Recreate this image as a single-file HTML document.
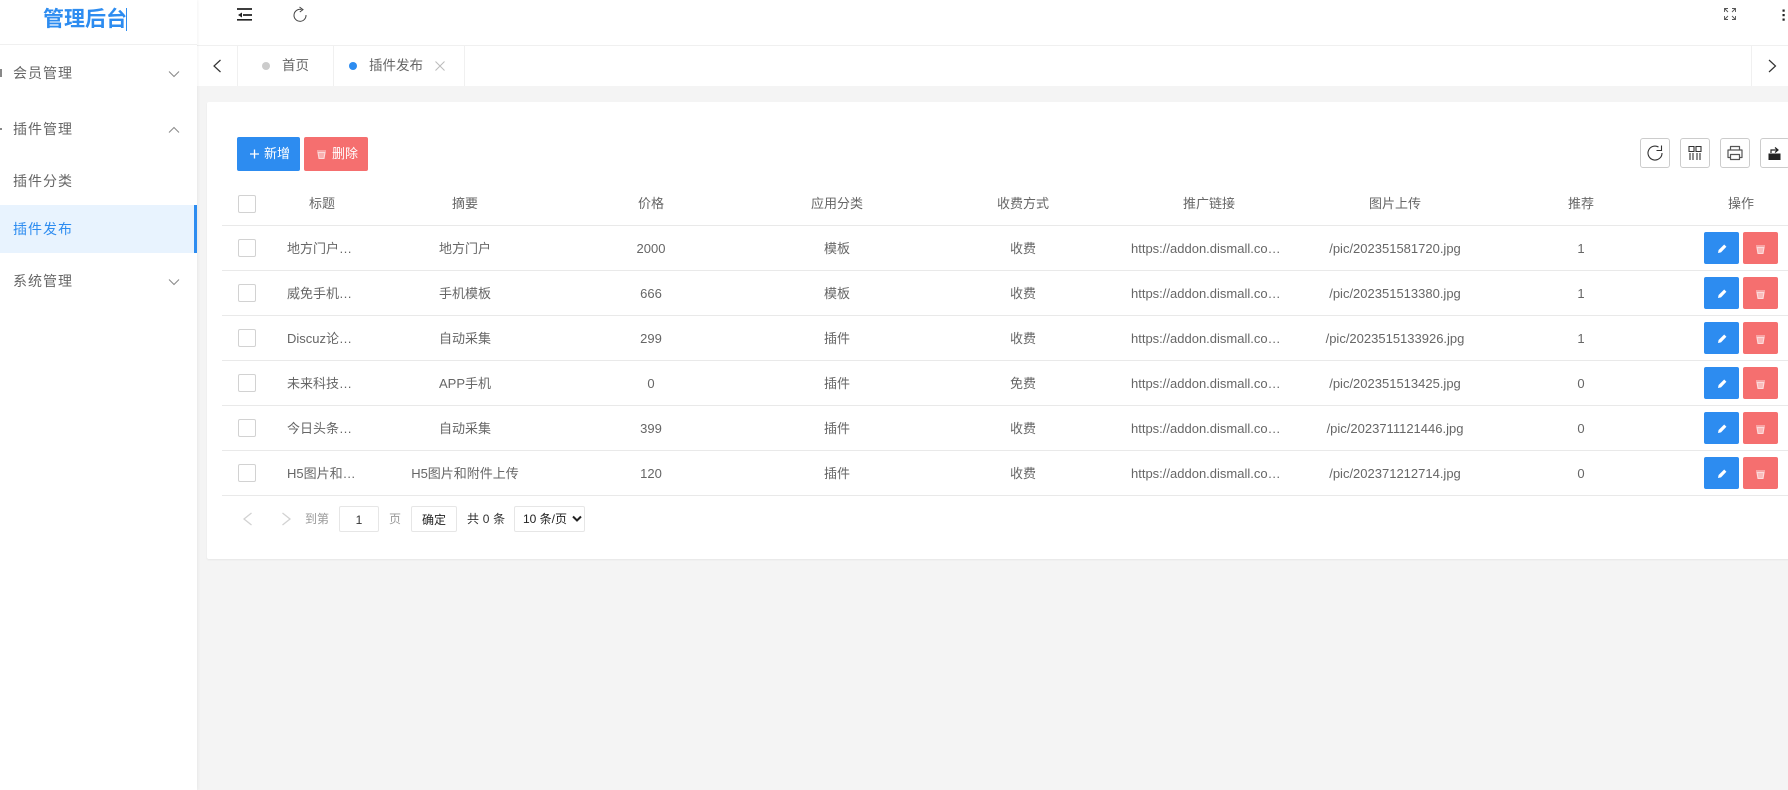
<!DOCTYPE html>
<html lang="zh-CN">
<head>
<meta charset="utf-8">
<title>管理后台</title>
<style>
*{box-sizing:border-box}
html,body{margin:0;padding:0;width:1788px;height:790px;overflow:hidden;background:#f4f4f4;font-family:"Liberation Sans","Noto Sans CJK SC",sans-serif;color:#666}
.abs,.abs>*{position:absolute}
#side{left:0;top:0;width:197px;height:790px;background:#fff;box-shadow:1px 0 3px rgba(0,0,0,.05);z-index:3}
#side .logo{left:0;top:0;width:197px;height:45px;border-bottom:1px solid #f0f0f0}
#side .logo b{position:absolute;left:43px;top:5px;font-size:21px;line-height:30px;color:#2d8cf0;white-space:nowrap}
#side .logo i{position:absolute;left:126px;top:8px;width:1px;height:23px;background:#2d8cf0}
#side .m{left:13px;font-size:14px;letter-spacing:1px;line-height:20px;color:#666;white-space:nowrap}
#side .act{left:0;top:205px;width:197px;height:48px;background:#e8f3fe;border-right:3px solid #2d8cf0}
#head{left:197px;top:0;width:1591px;height:46px;background:#fff;border-bottom:1px solid #f0f0f0}
#tabs{left:197px;top:46px;width:1591px;height:40px;background:#fff}
#tabs .d{top:0;width:1px;height:40px;background:#f0f0f0}
#tabs .t{top:10px;font-size:13.5px;line-height:20px;color:#666;white-space:nowrap}
#tabs .o{top:16px;width:8px;height:8px;border-radius:50%}
#card{left:207px;top:102px;width:1600px;height:457px;background:#fff;border-radius:2px;box-shadow:0 1px 2px rgba(0,0,0,.06)}
.btn{height:34px;top:137px;border-radius:2px;color:#fff;font-size:13px;line-height:34px;white-space:nowrap}
.tool{top:138px;width:30px;height:30px;border:1px solid #ccc;border-radius:3px;background:#fff}
.tool svg{position:absolute;left:0;top:0}
table{position:absolute;left:222px;top:180px;width:1586px;border-collapse:collapse;table-layout:fixed;font-size:13px;color:#666}
td,th{height:45px;padding:0;text-align:center;font-weight:400;border-bottom:1px solid #e9e9e9;white-space:nowrap;position:relative}
td.l{text-align:left;padding-left:15px}
td.n{padding-top:2px}
.cb{display:block;width:18px;height:18px;border:1px solid #d2d2d2;border-radius:2px;background:#fff;margin-left:16px}
th .cb{position:relative;top:2px}
#pg{left:0;top:0;width:1788px;height:790px;pointer-events:none;z-index:2}
#pg span{white-space:nowrap;line-height:20px;top:509px}
.box{border:1px solid #e6e6e6;border-radius:2px;background:#fff;text-align:center;color:#333}
</style>
</head>
<body>
<div class="abs" style="left:0;top:0;width:1788px;height:790px">

<div id="head" class="abs">
  <svg style="left:40px;top:7px" width="16" height="15" viewBox="0 0 16 15"><path d="M0 2H15M6 8H15M0 12.8H15" stroke="#222" stroke-width="1.7" fill="none"/><path d="M1 8L5 5.5V10.5Z" fill="#222"/></svg>
  <svg style="left:95px;top:6px" width="16" height="17" viewBox="0 0 16 17"><path d="M9.5 3.5A6 6 0 1 0 14 9" stroke="#444" stroke-width="1" fill="none"/><path d="M7.5 1L11 3.6L7.8 6" stroke="#444" stroke-width="1" fill="none"/></svg>
  <svg style="left:1526px;top:7px" width="14" height="14" viewBox="0 0 14 14"><path d="M1.5 5V1.5H5M1.5 1.5L5 5M9 1.5H12.5V5M12.5 1.5L9 5M1.5 9V12.5H5M1.5 12.5L5 9M12.5 9V12.5H9M12.5 12.5L9 9" stroke="#555" stroke-width=".9" fill="none"/></svg>
  <svg style="left:1585px;top:9px" width="4" height="14" viewBox="0 0 4 14"><rect x="0.5" y="0.5" width="2.2" height="2.2" fill="#222"/><rect x="0.5" y="5" width="2.2" height="2.2" fill="#222"/><rect x="0.5" y="9.5" width="2.2" height="2.2" fill="#222"/></svg>
</div>

<div id="tabs" class="abs">
  <svg style="left:16px;top:13px" width="9" height="14" viewBox="0 0 9 14"><path d="M7.5 1L1 7L7.5 13" stroke="#333" stroke-width="1.2" fill="none"/></svg>
  <i class="d" style="left:40px"></i>
  <i class="o" style="left:65px;background:#ccc"></i>
  <span class="t" style="left:85px">首页</span>
  <i class="d" style="left:136px"></i>
  <i class="o" style="left:152px;background:#2d8cf0"></i>
  <span class="t" style="left:172px">插件发布</span>
  <svg style="left:238px;top:15px" width="10" height="10" viewBox="0 0 10 10"><path d="M0.5 0.5L9.5 9.5M9.5 0.5L0.5 9.5" stroke="#bbb" stroke-width="1" fill="none"/></svg>
  <i class="d" style="left:267px"></i>
  <i class="d" style="left:1554px"></i>
  <svg style="left:1571px;top:13px" width="9" height="14" viewBox="0 0 9 14"><path d="M1 1L7.5 7L1 13" stroke="#333" stroke-width="1.2" fill="none"/></svg>
</div>

<div id="card"></div>

<div class="abs btn" style="left:237px;width:63px;background:#2d8cf0">
  <svg style="left:11px;top:10px" width="13" height="14" viewBox="0 0 13 14"><path d="M6.5 2.5V11.5M2 7H11" stroke="#fff" stroke-width="1.3" fill="none"/></svg>
  <span style="left:27px;top:0">新增</span>
</div>
<div class="abs btn" style="left:304px;width:64px;background:#f56f6f">
  <svg style="left:12px;top:12px" width="11" height="11" viewBox="0 0 11 11"><path d="M1 2H10M2 3.5L3 9.5H8L9 3.5Z" stroke="#fbdada" stroke-width="1.1" fill="#fbdada" fill-opacity=".6"/></svg>
  <span style="left:28px;top:0">删除</span>
</div>

<div class="abs tool" style="left:1640px">
  <svg width="28" height="28" viewBox="0 0 28 28"><path d="M17.5 8A7 7 0 1 0 21 14" stroke="#333" stroke-width="1.1" fill="none"/><path d="M20.5 6.5V11.5H15.5" stroke="#333" stroke-width="1.1" fill="none"/></svg>
</div>
<div class="abs tool" style="left:1680px">
  <svg width="28" height="28" viewBox="0 0 28 28"><path d="M8 7.5H13V12.5H8ZM15 7.5H20V12.5H15ZM9 14V21M12 14V21M16 14V21M19 14V21" stroke="#333" stroke-width="1.1" fill="none"/></svg>
</div>
<div class="abs tool" style="left:1720px">
  <svg width="28" height="28" viewBox="0 0 28 28"><path d="M9.5 11V7.5H18.5V11M9.5 18.5H7V11H21V18.5H18.5M9.5 15.5H18.5V20.5H9.5Z" stroke="#555" stroke-width="1.2" fill="none" stroke-linejoin="round"/></svg>
</div>
<div class="abs tool" style="left:1760px;width:30px">
  <svg width="28" height="28" viewBox="0 0 28 28"><path d="M7.5 14.5H19.5V21H7.5Z" fill="#222"/><path d="M10 14V11H16M14 8.5L17 11L14 13.5" stroke="#222" stroke-width="1.2" fill="none"/></svg>
</div>

<table>
<colgroup><col style="width:50px"><col style="width:100px"><col style="width:186px"><col style="width:186px"><col style="width:186px"><col style="width:186px"><col style="width:186px"><col style="width:186px"><col style="width:186px"><col style="width:134px"></colgroup>
<tr><th><i class="cb"></i></th><th>标题</th><th>摘要</th><th>价格</th><th>应用分类</th><th>收费方式</th><th>推广链接</th><th>图片上传</th><th>推荐</th><th>操作</th></tr>
<tr><td><i class="cb"></i></td><td class="l">地方门户…</td><td>地方门户</td><td class="n">2000</td><td>模板</td><td>收费</td><td class="l n">https://addon.dismall.co…</td><td class="n">/pic/202351581720.jpg</td><td class="n">1</td><td></td></tr>
<tr><td><i class="cb"></i></td><td class="l">威免手机…</td><td>手机模板</td><td class="n">666</td><td>模板</td><td>收费</td><td class="l n">https://addon.dismall.co…</td><td class="n">/pic/202351513380.jpg</td><td class="n">1</td><td></td></tr>
<tr><td><i class="cb"></i></td><td class="l">Discuz论…</td><td>自动采集</td><td class="n">299</td><td>插件</td><td>收费</td><td class="l n">https://addon.dismall.co…</td><td class="n">/pic/2023515133926.jpg</td><td class="n">1</td><td></td></tr>
<tr><td><i class="cb"></i></td><td class="l">未来科技…</td><td>APP手机</td><td class="n">0</td><td>插件</td><td>免费</td><td class="l n">https://addon.dismall.co…</td><td class="n">/pic/202351513425.jpg</td><td class="n">0</td><td></td></tr>
<tr><td><i class="cb"></i></td><td class="l">今日头条…</td><td>自动采集</td><td class="n">399</td><td>插件</td><td>收费</td><td class="l n">https://addon.dismall.co…</td><td class="n">/pic/2023711121446.jpg</td><td class="n">0</td><td></td></tr>
<tr><td><i class="cb"></i></td><td class="l">H5图片和…</td><td>H5图片和附件上传</td><td class="n">120</td><td>插件</td><td>收费</td><td class="l n">https://addon.dismall.co…</td><td class="n">/pic/202371212714.jpg</td><td class="n">0</td><td></td></tr>
</table>

<svg style="position:absolute;left:1704px;top:232px" width="74" height="257" viewBox="0 0 74 257">
  <defs>
    <g id="ops">
      <rect x="0" y="0" width="35" height="32" rx="2" fill="#2d8cf0"/>
      <path d="M14 21L14.6 18L20.2 12.5L22.4 14.7L17 20.4Z" fill="#fff"/>
      <rect x="39" y="0" width="35" height="32" rx="2" fill="#f56f6f"/>
      <path d="M52 14H61M53 15.5L54 21.5H59L60 15.5Z" stroke="#fcdcdc" stroke-width="1.1" fill="#fcdcdc" fill-opacity=".7"/>
    </g>
  </defs>
  <use href="#ops" y="0"/><use href="#ops" y="45"/><use href="#ops" y="90"/><use href="#ops" y="135"/><use href="#ops" y="180"/><use href="#ops" y="225"/>
</svg>

<div id="pg" class="abs" style="font-size:13px">
  <svg style="left:242px;top:511px" width="11" height="16" viewBox="0 0 11 16"><path d="M9.5 2L2 8L9.5 14" stroke="#d2d2d2" stroke-width="1.3" fill="none"/></svg>
  <svg style="left:281px;top:511px" width="11" height="16" viewBox="0 0 11 16"><path d="M1.5 2L9 8L1.5 14" stroke="#d2d2d2" stroke-width="1.3" fill="none"/></svg>
  <span style="left:305px;font-size:12px;color:#999">到第</span>
  <div class="box" style="left:339px;top:506px;width:40px;height:26px;line-height:26px;font-size:12px;color:#333">1</div>
  <span style="left:389px;font-size:12px;color:#999">页</span>
  <div class="box" style="left:411px;top:506px;width:46px;height:26px;line-height:26px;font-size:12px;color:#222">确定</div>
  <span style="left:467px;font-size:12px;color:#333;letter-spacing:.2px">共 0 条</span>
  <div class="box" style="left:514px;top:506px;width:71px;height:26px;line-height:25px;font-size:12px;color:#222;text-align:left;padding-left:8px">10 条/页</div>
  <svg style="left:572px;top:515px" width="10" height="8" viewBox="0 0 10 8"><path d="M1 1.5L5 5.5L9 1.5" stroke="#222" stroke-width="2" fill="none"/></svg>
</div>

<div id="side" class="abs">
  <div class="logo"><b>管理后台</b><i></i></div>
  <i style="left:0;top:69px;width:1.5px;height:8px;background:#888"></i>
  <span class="m" style="top:63px">会员管理</span>
  <svg style="left:168px;top:70px" width="12" height="8" viewBox="0 0 12 8"><path d="M1 1.5L6 6.5L11 1.5" stroke="#888" stroke-width="1" fill="none"/></svg>
  <i style="left:0;top:128px;width:1.5px;height:2px;background:#888"></i>
  <span class="m" style="top:119px">插件管理</span>
  <svg style="left:168px;top:126px" width="12" height="8" viewBox="0 0 12 8"><path d="M1 6.5L6 1.5L11 6.5" stroke="#888" stroke-width="1" fill="none"/></svg>
  <span class="m" style="top:171px">插件分类</span>
  <div class="act"></div>
  <span class="m" style="top:219px;color:#2d8cf0">插件发布</span>
  <span class="m" style="top:271px">系统管理</span>
  <svg style="left:168px;top:278px" width="12" height="8" viewBox="0 0 12 8"><path d="M1 1.5L6 6.5L11 1.5" stroke="#888" stroke-width="1" fill="none"/></svg>
</div>

</div>
</body>
</html>
